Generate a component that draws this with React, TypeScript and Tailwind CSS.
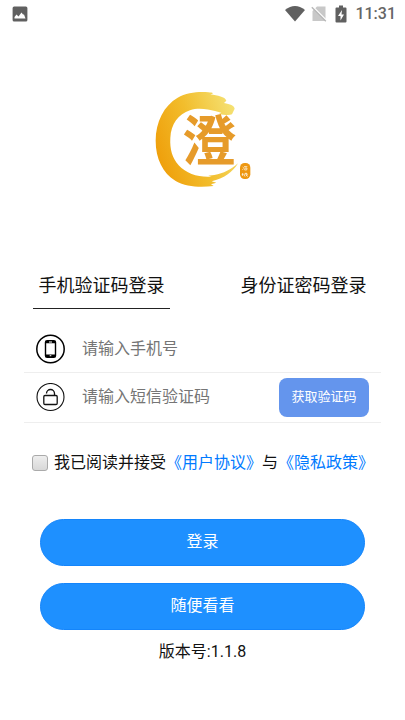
import { useState } from "react";

function StatusBar() {
  return (
    <header className="flex h-7 items-center pl-3 pr-[9px] text-[#666]">
      <svg viewBox="0 0 16 16" className="size-4" aria-hidden="true">
        <rect x="0.600" y="0.600" width="14.800" height="14.800" rx="1.500" fill="#606060" />
        <path d="M2.500 12.500v-1.500l2-2.500 2 2 3-4 1.500 2 1 0 1.500 4z" fill="#fff" />
      </svg>
      <div className="ml-auto flex items-center">
        <svg viewBox="0 0 20 16" className="h-4 w-5" aria-hidden="true">
          <path d="M0 4Q10-4 20 4L10 15.500z" fill="#606060" />
        </svg>
        <svg viewBox="0 0 16 16" className="ml-1.5 size-4" aria-hidden="true">
          <path d="M6 0.500h8.500v14.500H1.500V5z" fill="#c8c8c8" />
          <path d="M1.800 0.800l13.500 13.500" stroke="#fff" strokeWidth="1.600" />
          <path d="M0.800 1.300l14 14" stroke="#b8b8b8" strokeWidth="1.400" />
        </svg>
        <svg viewBox="0 0 12 18" className="ml-2 h-[18px] w-3" aria-hidden="true">
          <path d="M4 0.500h4v2h2.500q1 0 1 1V16.500q0 1-1 1h-9q-1 0-1-1V3.500q0-1 1-1H4z" fill="#606060" />
          <path d="M7 5L3 11h2.500v4.500L9 9.500H6.500z" fill="#fff" />
        </svg>
        <span className="ml-2 font-[Roboto] text-base font-medium">11:31</span>
      </div>
    </header>
  );
}

function Logo() {
  return (
    <svg viewBox="0 0 345 345" className="mx-auto size-[115px]" role="img" aria-label="澄">
      <defs>
        <linearGradient id="ring" x1="0" y1="0.600" x2="1" y2="0.200">
          <stop offset="0" stopColor="#efa00c" />
          <stop offset="0.450" stopColor="#f2bd2c" />
          <stop offset="1" stopColor="#f5e377" />
        </linearGradient>
      </defs>
      <path
        d="M244 62C240 50 218 47 196 43C208 41 205 38 190 37C165 34 125 37 98 53C57 77 32 125 32 182C32 235 53 279 92 303C124 321 166 323 206 318L198 313L214 308L200 304C236 296 264 276 279 250C258 269 236 280 208 285L190 287L200 290C162 293 125 282 101 256C82 234 74 208 76 174C78 132 100 102 135 91C162 82 190 89 210 93L229 98L222 102C238 105 253 107 261 103L269 86C267 76 256 73 237 69Z"
        fill="url(#ring)"
      />
      <text
        x="192"
        y="243"
        textAnchor="middle"
        fontSize="162"
        fontWeight="700"
        fill="#e69b2a"
        className="font-['Noto_Sans_CJK_SC',sans-serif]"
      >
        澄
      </text>
      <rect x="285" y="249" width="31" height="48" rx="14" fill="#ee9711" />
      <path
        d="M293 261l3 2M292 269l4-3M300 258l-2 4M299 260h8M300 264h6l-1 6h-6l1-6M293 279v9M290 283h6M299 281h8M300 281l-2 8M303 278l1 7 5 5M308 283l-6 6"
        fill="none"
        stroke="#fff"
        strokeWidth="2"
      />
    </svg>
  );
}

function PhoneIcon() {
  return (
    <svg viewBox="0 0 30 30" className="size-[30px] shrink-0" fill="none" stroke="#000" aria-hidden="true">
      <circle cx="14.500" cy="15" r="13.700" strokeWidth="1.500" />
      <rect x="9.500" y="6.700" width="10" height="16.600" rx="1.600" strokeWidth="1.400" />
      <path d="M9.500 7h10v2.300h-10zM9.500 20.500h10v2.500h-10z" fill="#000" stroke="none" />
      <path d="M13 8h3M13.700 21.700h1.600" stroke="#fff" />
    </svg>
  );
}

function LockIcon() {
  return (
    <svg viewBox="0 0 30 30" className="size-[30px] shrink-0" fill="none" stroke="#111" aria-hidden="true">
      <circle cx="14.500" cy="14" r="13.500" strokeWidth="1.100" />
      <rect x="7.800" y="12.500" width="13.400" height="9" rx="1.200" strokeWidth="1.300" />
      <path d="M10.500 10.500a4 4 0 0 1 8 0v2" strokeWidth="1.300" />
    </svg>
  );
}

export default function App() {
  const [tab, setTab] = useState("sms");
  const [agreed, setAgreed] = useState(false);

  const tabClass = "flex h-12 w-[137px] items-center justify-center border-b pt-0.5 text-lg whitespace-nowrap";
  const pillClass = "h-[47px] rounded-full border border-[#1485fb] bg-[#1e90ff] pb-0.5 text-base text-white";

  return (
    <div className="min-h-screen bg-white font-[Roboto,'Noto_Sans_CJK_SC',sans-serif] text-[#111]">
      <StatusBar />
      <main className="pt-[52px]">
        <Logo />

        <nav className="mt-[66px] flex justify-between px-[33px]">
          <button
            type="button"
            onClick={() => setTab("sms")}
            className={`${tabClass} ${tab === "sms" ? "border-[#222]" : "border-transparent"}`}
          >
            手机验证码登录
          </button>
          <button
            type="button"
            onClick={() => setTab("id")}
            className={`${tabClass} ${tab === "id" ? "border-[#222]" : "border-transparent"}`}
          >
            身份证密码登录
          </button>
        </nav>

        <form onSubmit={(e) => e.preventDefault()}>
          <div className="mx-6 mt-4 flex h-12 items-center border-b border-[#eee] pl-3">
            <PhoneIcon />
            <input
              type="tel"
              aria-label="手机号"
              placeholder="请输入手机号"
              className="ml-4 min-w-0 flex-1 text-base outline-none placeholder:text-[#757575]"
            />
          </div>
          <div className="mx-6 flex h-[50px] items-center border-b border-[#eee] pl-3 pr-3">
            <LockIcon />
            <input
              type="text"
              aria-label="短信验证码"
              placeholder="请输入短信验证码"
              className="ml-4 min-w-0 flex-1 pb-0.5 text-base outline-none placeholder:text-[#757575]"
            />
            <button type="button" className="h-[39px] w-[90px] shrink-0 rounded-lg bg-[#6495ed] pb-0.5 text-[13px] text-white">
              获取验证码
            </button>
          </div>

          <div className="mt-7 flex items-center pl-8 text-base whitespace-nowrap">
            <input
              id="agree"
              type="checkbox"
              checked={agreed}
              onChange={(e) => setAgreed(e.target.checked)}
              className="mr-1.5 size-4 shrink-0 appearance-none rounded-[3px] border border-[#aaa] bg-linear-to-b from-[#eee] to-[#d8d8d8] checked:from-[#007aff] checked:to-[#007aff]"
            />
            <label htmlFor="agree">我已阅读并接受</label>
            <a href="#terms" className="text-[#007aff]">《用户协议》</a>
            <span>与</span>
            <a href="#privacy" className="text-[#007aff]">《隐私政策》</a>
          </div>

          <div className="mt-11 flex flex-col gap-[17px] px-10">
            <button type="submit" className={pillClass}>
              登录
            </button>
            <button type="button" className={pillClass}>
              随便看看
            </button>
          </div>
        </form>

        <p className="mt-2.5 text-center text-base">版本号:1.1.8</p>
      </main>
    </div>
  );
}
